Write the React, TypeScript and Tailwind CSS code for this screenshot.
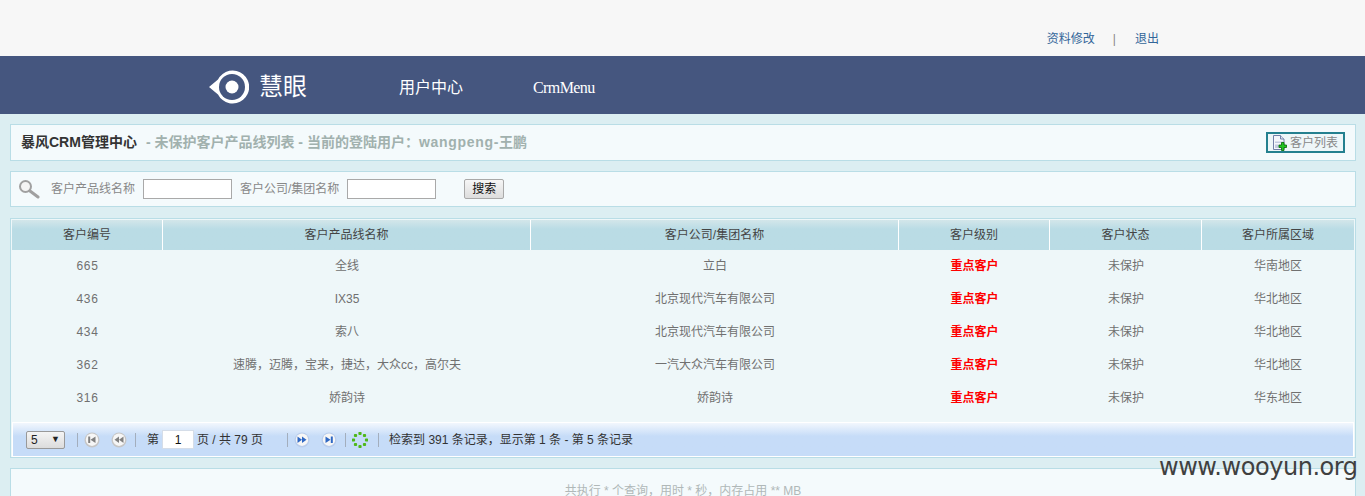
const cjk = { fontFamily: '"Liberation Sans", "Noto Sans CJK SC", sans-serif' }

const columns = [
  { label: '客户编号', width: 'w-[151px]' },
  { label: '客户产品线名称', width: 'w-[368px]' },
  { label: '客户公司/集团名称', width: 'w-[368px]' },
  { label: '客户级别', width: 'w-[151px]' },
  { label: '客户状态', width: 'w-[152px]' },
  { label: '客户所属区域', width: 'w-[152px]' },
]

const rows = [
  ['665', '全线', '立白', '华南地区'],
  ['436', 'IX35', '北京现代汽车有限公司', '华北地区'],
  ['434', '索八', '北京现代汽车有限公司', '华北地区'],
  ['362', '速腾，迈腾，宝来，捷达，大众cc，高尔夫', '一汽大众汽车有限公司', '华北地区'],
  ['316', '娇韵诗', '娇韵诗', '华东地区'],
]

function Eye() {
  return (
    <svg width="41" height="34" viewBox="0 0 41 34" className="mt-[3px] shrink-0">
      <path d="M1 17 L10 9.5 A16.5 16.5 0 1 1 10 24.5 Z" fill="#ffffff" />
      <circle cx="24" cy="17" r="13" fill="#45567f" />
      <circle cx="24" cy="17" r="6.5" fill="#ffffff" />
    </svg>
  )
}

function PageButton({ kind, active }: { kind: 'first' | 'prev' | 'next' | 'last'; active?: boolean }) {
  const color = active ? '#2f68c4' : '#808080'
  return (
    <svg width="16" height="16" viewBox="0 0 16 16" className="block shrink-0">
      <circle cx="8" cy="8" r="7.5" fill={active ? '#b9cdec' : '#c6c6c6'} />
      <circle cx="8" cy="7.7" r="6.2" fill="#f6f6f6" />
      {kind === 'first' && (
        <>
          <rect x="4.2" y="4.5" width="2" height="6.5" fill={color} />
          <path d="M11.5 4.5v6.5L6.5 7.75z" fill={color} />
        </>
      )}
      {kind === 'prev' && (
        <>
          <path d="M8 4.5v6.5L3.5 7.75z" fill={color} />
          <path d="M12.5 4.5v6.5L8 7.75z" fill={color} />
        </>
      )}
      {kind === 'next' && (
        <>
          <path d="M3.5 4.5v6.5L8 7.75z" fill={color} />
          <path d="M8 4.5v6.5l4.5-3.25z" fill={color} />
        </>
      )}
      {kind === 'last' && (
        <>
          <path d="M4.5 4.5v6.5l5-3.25z" fill={color} />
          <rect x="9.8" y="4.5" width="2" height="6.5" fill={color} />
        </>
      )}
    </svg>
  )
}

function Refresh() {
  const dots = [
    [8, 1.5], [12.5, 3.5], [14.5, 8], [12.5, 12.5], [8, 14.5], [3.5, 12.5], [1.5, 8], [3.5, 3.5],
  ]
  return (
    <svg width="16" height="16" viewBox="0 0 16 16" className="block shrink-0">
      {dots.map(([x, y]) => (
        <rect key={`${x}-${y}`} x={x - 1.6} y={y - 1.6} width="3.2" height="3.2" rx="1" fill="#4fb81a" />
      ))}
    </svg>
  )
}

function Sep({ className }: { className: string }) {
  return <span className={`h-[14px] w-px shrink-0 bg-[#a3aebd] ${className}`} />
}

export default function App() {
  return (
    <div className="relative h-[496px] overflow-hidden bg-[#dceef2]" style={cjk}>
      <div className="flex h-[56px] items-start justify-end bg-[#f7f7f7] pr-[206px] pt-[31px] text-[12px] leading-[16px] text-[#336699]">
        <a>资料修改</a>
        <span className="ml-[18px] mr-[19px] text-[#888888]">|</span>
        <a>退出</a>
      </div>

      <div className="flex h-[58px] items-center bg-[#45567f] pl-[208px] text-white">
        <Eye />
        <span className="ml-[10px] mt-[3px] text-[24px] leading-none">慧眼</span>
        <span className="ml-[92px] mt-[5px] text-[16px]">用户中心</span>
        <span className="ml-[70px] mt-[5px] font-['Liberation_Serif'] text-[16px] tracking-[-.6px]">CrmMenu</span>
      </div>

      <div className="flex flex-col pl-[10px] pr-[9px] pt-[10px]">
        <div className="flex h-[37px] items-center justify-between border border-[#b9dde6] bg-[#f4fafc] pl-[10px] pr-[10px]">
          <div className="flex items-center text-[14px] font-bold">
            <span className="text-[#333333]">暴风CRM管理中心</span>
            <span className="ml-[9px] text-[#a1b1ae]">
              - 未保护客户产品线列表 - 当前的登陆用户：<span className="tracking-[.7px]">wangpeng-</span>王鹏
            </span>
          </div>
          <div className="flex h-[21px] w-[79px] items-center border-2 border-[#24808f] bg-[#eef6f8] pl-[4px] text-[12px] text-[#888888]">
            <svg width="15" height="16" viewBox="0 0 15 16" className="shrink-0">
              <path d="M1.5 .5h7l3.5 3.5v10.5h-10.500z" fill="#f5f6fb" stroke="#7380a8" />
              <path d="M8.500 .5v3.500h3.500" fill="#dfe3f0" stroke="#7380a8" />
              <rect x="3" y="6.500" width="8" height="1.500" fill="#c3cbe0" />
              <rect x="3" y="9.500" width="4" height="3.500" fill="#c3cbe0" />
              <path d="M9.500 7.500h2.500v2.500h2.500v2.500h-2.500v3h-2.500v-3h-2.500v-2.500h2.500z" fill="#22c422" stroke="#046604" strokeWidth=".8" />
            </svg>
            <span className="ml-[3px]">客户列表</span>
          </div>
        </div>

        <div className="mt-[10px] flex h-[36px] items-center border border-[#b9dde6] bg-[#f4fafc] text-[12px] text-[#888888]">
          <svg width="22" height="20" viewBox="0 0 22 20" className="ml-[7px] shrink-0">
            <circle cx="7.500" cy="7.500" r="5.500" fill="#f4f4f4" stroke="#a0a0a0" strokeWidth="2" />
            <path d="M12 12l8 6" stroke="#a0a0a0" strokeWidth="3" strokeLinecap="round" />
          </svg>
          <span className="ml-[11px]">客户产品线名称</span>
          <input className="ml-[8px] h-[20px] w-[89px] border border-[#a9a9a9] bg-white" />
          <span className="ml-[8px]">客户公司/集团名称</span>
          <input className="ml-[8px] h-[20px] w-[89px] border border-[#a9a9a9] bg-white" />
          <button className="ml-[28px] h-[20px] w-[40px] rounded-[2px] border border-[#a9a9a9] bg-gradient-to-b from-[#f6f6f6] to-[#dddddd] text-[12px] text-[#111111]">
            搜索
          </button>
        </div>

        <div className="mt-[11px] h-[240px] border border-[#b9dde6] bg-[#eef7f9] p-px">
          <table className="w-[1342px] table-fixed border-separate border-spacing-0 text-center text-[12px]">
            <thead>
              <tr>
                {columns.map((col, i) => (
                  <th
                    key={col.label}
                    className={`${col.width} ${i < 5 ? 'border-r border-white' : ''} h-[30px] bg-gradient-to-b from-[#d3e6ea] from-0% to-[#badce5] to-30% font-normal text-[#444444]`}
                  >
                    {col.label}
                  </th>
                ))}
              </tr>
            </thead>
            <tbody className="text-[#707070]">
              {rows.map((row) => (
                <tr key={row[0]} className="h-[33px]">
                  <td className="pb-[1px] tracking-[.6px]">{row[0]}</td>
                  <td className="pb-[1px]">{row[1]}</td>
                  <td className="pb-[1px]">{row[2]}</td>
                  <td className="pb-[1px] font-bold text-[#ff0000]">重点客户</td>
                  <td className="pb-[1px]">未保护</td>
                  <td className="pb-[1px]">{row[3]}</td>
                </tr>
              ))}
            </tbody>
          </table>

          <div className="mt-[7px] flex h-[35px] items-center border border-white bg-gradient-to-b from-[#f2f7fd] to-[#c6dcf8] to-40% pl-[13px] text-[12px] text-[#333333]">
            <div className="flex h-[18px] w-[39px] items-center justify-between rounded-[2px] border border-[#999999] bg-gradient-to-b from-[#f4f4f4] to-[#dcdcdc] px-[4px] text-[#222222]">
              <span>5</span>
              <span className="text-[9px]">▼</span>
            </div>
            <Sep className="ml-[12px]" />
            <span className="ml-[6px]"><PageButton kind="first" /></span>
            <span className="ml-[11px]"><PageButton kind="prev" /></span>
            <Sep className="ml-[8px]" />
            <span className="ml-[11px]">第</span>
            <div className="ml-[3px] flex h-[19px] w-[32px] items-center justify-center border border-[#d5dde8] bg-white text-[#111111]">1</div>
            <span className="ml-[3px]">页 / 共 79 页</span>
            <Sep className="ml-[24px]" />
            <span className="ml-[6px]"><PageButton kind="next" active /></span>
            <span className="ml-[11px]"><PageButton kind="last" active /></span>
            <Sep className="ml-[8px]" />
            <span className="ml-[6px]"><Refresh /></span>
            <Sep className="ml-[10px]" />
            <span className="ml-[10px]">检索到 391 条记录，显示第 1 条 - 第 5 条记录</span>
          </div>
        </div>

        <div className="mt-[10px] flex h-[60px] justify-center border border-[#b9dde6] bg-[#f4fafc] pt-[17px] text-[12px] leading-[10px] text-[#b0b8b8]">
          共执行 * 个查询，用时 * 秒，内存占用 ** MB
        </div>
      </div>

      <span className="absolute left-[1159px] top-[451px] font-['DejaVu_Sans'] text-[24px] leading-[32px] tracking-[-.45px] text-[#404040]">
        www.wooyun.org
      </span>
    </div>
  )
}
